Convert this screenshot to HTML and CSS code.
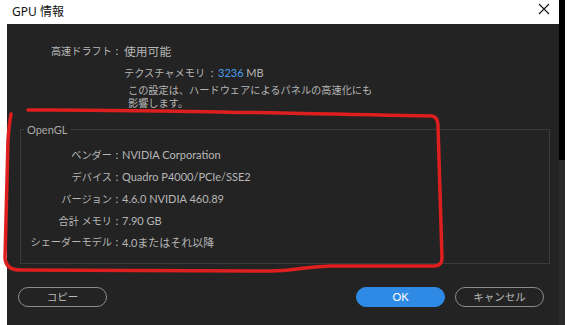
FILE: index.html
```html
<!DOCTYPE html>
<html lang="ja">
<head>
<meta charset="utf-8">
<title>GPU 情報</title>
<link rel="stylesheet" href="styles.css">
</head>
<body>
<div class="screen">
  <div class="window">
    <div class="titlebar">
      <span class="title">GPU 情報</span>
      <svg class="close" width="12" height="12" viewBox="0 0 12 12"><path d="M1 1 L11 11 M11 1 L1 11" stroke="#111" stroke-width="1.1" fill="none"/></svg>
    </div>
    <div class="panel">
      <div class="row first">
        <span class="label">高速ドラフト</span><span class="colon">:</span><span class="value">使用可能</span>
      </div>
      <div class="texture">
        <div class="tex-line">テクスチャメモリ<span class="colon wide">:</span><span class="num">3236</span> <span class="unit">MB</span></div>
        <p class="note">この設定は、ハードウェアによるパネルの高速化にも<br>影響します。</p>
      </div>
      <fieldset class="group">
        <legend>OpenGL</legend>
        <div class="row"><span class="label">ベンダー</span><span class="colon">:</span><span class="value">NVIDIA Corporation</span></div>
        <div class="row"><span class="label">デバイス</span><span class="colon">:</span><span class="value">Quadro P4000/PCIe/SSE2</span></div>
        <div class="row"><span class="label">バージョン</span><span class="colon">:</span><span class="value">4.6.0 NVIDIA 460.89</span></div>
        <div class="row"><span class="label">合計 メモリ</span><span class="colon">:</span><span class="value">7.90 GB</span></div>
        <div class="row"><span class="label">シェーダーモデル</span><span class="colon">:</span><span class="value">4.0またはそれ以降</span></div>
      </fieldset>
      <div class="buttons">
        <button class="btn outline copy">コピー</button>
        <span class="spacer"></span>
        <button class="btn primary">OK</button>
        <button class="btn outline">キャンセル</button>
      </div>
    </div>
  </div>
  <div class="edge"></div>
</div>
<svg class="markup" width="570" height="325" viewBox="0 0 570 325">
  <path d="M28 110 C120 109, 260 113, 432 116 Q438 117 438 126 L442 258 Q442 266 434 266 L330 266 C300 267, 295 271, 270 271 L20 270 Q6 270 5 258 L8 140 Q9 125 11 114" fill="none" stroke="#dd1f1f" stroke-width="3.5" stroke-linecap="round" stroke-linejoin="round"/>
</svg>
</body>
</html>
```
FILE: styles.css
```css
* { box-sizing: border-box; }
html, body { margin: 0; padding: 0; background: #ffffff; }
body {
  width: 570px;
  height: 325px;
  overflow: hidden;
  position: relative;
  font-family: "Lato", "Noto Sans CJK JP", sans-serif;
}
.screen {
  display: flex;
  height: 325px;
}
.window {
  width: 559px;
  display: flex;
  flex-direction: column;
}
.edge {
  width: 6px;
  background: linear-gradient(#000 0, #000 160px, #2b2b2b 160px);
}
.titlebar {
  height: 24px;
  background: #fff;
  display: flex;
  align-items: center;
  justify-content: space-between;
  padding: 0 9px 3px 12px;
}
.title {
  font-family: "Noto Sans", "Noto Sans CJK JP", sans-serif;
  font-size: 12px;
  color: #111;
}
.close { display: block; margin-top: -4px; }
.panel {
  flex: 1;
  margin-left: 7px;
  background: #232323;
  color: #b6b6b6;
  font-size: 10.2px;
  display: flex;
  flex-direction: column;
  padding-top: 16px;
}
.row {
  display: flex;
  align-items: center;
  height: 21.8px;
  white-space: nowrap;
}
.label {
  width: 105px;
  text-align: right;
}
.colon {
  width: 10px;
  text-align: center;
  font-size: 11px;
}
.colon.wide {
  display: inline-block;
  width: 10px;
  margin: 0 1px 0 2px;
}
.value { font-size: 11px; }
.first .value { padding-left: 2px; font-size: 11.8px; }
.texture {
  padding-left: 117px;
  margin-top: 4px;
}
.tex-line { height: 14px; line-height: 14px; }
.num, .unit { font-size: 11px; }
.num { color: #4a9df0; }
.note {
  margin: 4px 0 0 4px;
  line-height: 13px;
}
.group {
  margin: 13px 9px 0 13px;
  border: 1px solid #3a3a3a;
  padding: 8px 0 10px 0;
  min-width: 0;
}
.group .label { width: 91px; }
.group legend {
  padding: 0 4px 0 3px;
  margin-left: 3px;
  color: #a8a8a8;
  font-size: 11px;
}
.buttons {
  display: flex;
  align-items: center;
  margin-top: 23px;
  padding: 0 15px 0 11px;
  gap: 10px;
}
.spacer { flex: 1; }
.btn {
  width: 89px;
  height: 20px;
  border-radius: 10px;
  font-family: "Lato", "Noto Sans CJK JP", sans-serif;
  font-size: 10.5px;
  padding: 0;
  line-height: 18px;
}
.outline {
  background: transparent;
  border: 1.5px solid #8c8c8c;
  color: #b8b8b8;
}
.primary {
  background: #2f8ae6;
  border: 1px solid #2f8ae6;
  color: #fff;
  font-size: 11px;
}
.markup {
  position: absolute;
  left: 0;
  top: 0;
  pointer-events: none;
}
```
